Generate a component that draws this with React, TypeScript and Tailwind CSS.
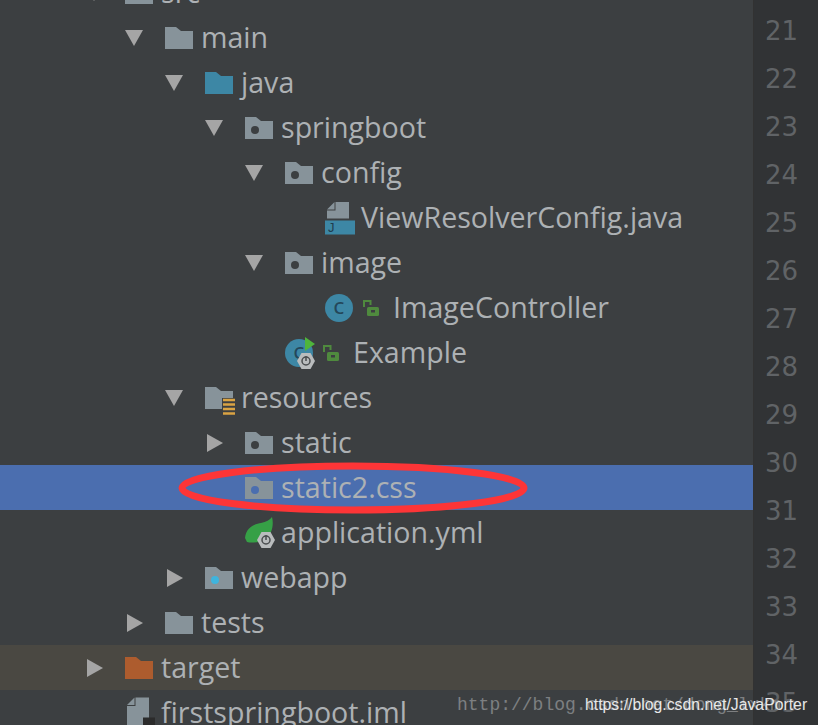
import type { ReactNode } from "react";

type TreeRow = {
  label: string;
  depth: number;
  arrow?: "down" | "right";
  icon: ReactNode;
  lock?: boolean;
  selected?: boolean;
  excluded?: boolean;
};

const gray = "#87939a";
const blue = "#3d87a5";

function Folder({ color = gray, dot, lines }: { color?: string; dot?: string; lines?: boolean }) {
  return (
    <svg width="28" height="22" viewBox="0 0 28 22" className="shrink-0 overflow-visible">
      <path d="M0 0H11L16 4H28V22H0Z" fill={color} />
      {dot && <circle cx="10" cy="13" r="4" fill={dot} />}
      {lines && (
        <g>
          <path d="M17 11H30V26H17Z" fill="#3c3f41" />
          <path d="M18 13H30M18 17.5H30M18 22H30M18 26.5H30" stroke="#d9a343" strokeWidth="2.4" />
        </g>
      )}
    </svg>
  );
}

function SpringHex({ x, y }: { x: number; y: number }) {
  return (
    <g transform={`translate(${x} ${y})`}>
      <path d="M4.5 0H13.5L18 8L13.5 16H4.5L0 8Z" fill="#b9bcbd" />
      <circle cx="9" cy="8" r="4" fill="none" stroke="#4a4d4f" strokeWidth="1.5" />
      <path d="M9 3V8" stroke="#4a4d4f" strokeWidth="1.5" />
    </g>
  );
}

function ClassIcon({ run }: { run?: boolean }) {
  return (
    <svg width="28" height="28" viewBox="0 0 28 28" className="shrink-0 overflow-visible">
      <circle cx="14" cy="14" r="14" fill={blue} />
      <text x="14" y="20" textAnchor="middle" fontSize="17" fontWeight="600" fill="#24475a" fontFamily="'Open Sans', sans-serif">
        C
      </text>
      {run && (
        <g>
          <path d="M20 -2L30 5L20 12Z" fill="#4fb53c" />
          <SpringHex x={12} y={14} />
        </g>
      )}
    </svg>
  );
}

function JavaFile() {
  return (
    <svg width="28" height="32" viewBox="0 0 28 32" className="shrink-0 overflow-visible">
      <path d="M10.5 0H24V16.5H2V8.5H10.5Z" fill={gray} />
      <path d="M2 7.5H9.5V0Z" fill={gray} />
      <rect x="0" y="18.5" width="30" height="14" fill={blue} />
      <text x="3" y="29.5" fontSize="13" fill="#1f3c4d" fontFamily="'Liberation Sans', sans-serif">
        J
      </text>
    </svg>
  );
}

function SpringLeaf() {
  return (
    <svg width="28" height="32" viewBox="0 0 28 32" className="shrink-0 overflow-visible">
      <path d="M0 21C1 10 10 7 16 6C21 5 25 3 27 0C29 8 27 17 21 22C14 26 6 26 2 25Z" fill="#36a046" />
      <SpringHex x={12} y={15} />
    </svg>
  );
}

function ImlFile() {
  return (
    <svg width="28" height="28" viewBox="0 0 28 28" className="shrink-0 overflow-visible">
      <path d="M10.5 -1.5H24V28H2V7H10.5Z" fill={gray} />
      <path d="M2 6H9.5V-1.5Z" fill={gray} />
      <rect x="18" y="18.5" width="12" height="10" fill="#2b2b2b" />
    </svg>
  );
}

function Lock() {
  return (
    <svg width="16" height="16" viewBox="0 0 16 16" className="shrink-0">
      <path d="M1 7V1H7.5V5" fill="none" stroke="#4f8a3e" strokeWidth="2" />
      <rect x="4" y="7" width="12" height="9" rx="1.5" fill="#4f8a3e" />
      <rect x="8" y="10" width="4" height="2.5" fill="#3c3f41" />
    </svg>
  );
}

function Arrow({ dir }: { dir: "down" | "right" }) {
  return (
    <svg width="18" height="18" viewBox="0 0 18 18" className="shrink-0">
      {dir === "down" ? <path d="M0 1H18L9 17Z" fill="#a5a5a5" /> : <path d="M2 0L18 9L2 18Z" fill="#a5a5a5" />}
    </svg>
  );
}

const rows: TreeRow[] = [
  { label: "src", depth: 0, arrow: "down", icon: <Folder /> },
  { label: "main", depth: 1, arrow: "down", icon: <Folder /> },
  { label: "java", depth: 2, arrow: "down", icon: <Folder color={blue} /> },
  { label: "springboot", depth: 3, arrow: "down", icon: <Folder dot="#3c3f41" /> },
  { label: "config", depth: 4, arrow: "down", icon: <Folder dot="#3c3f41" /> },
  { label: "ViewResolverConfig.java", depth: 5, icon: <JavaFile /> },
  { label: "image", depth: 4, arrow: "down", icon: <Folder dot="#3c3f41" /> },
  { label: "ImageController", depth: 5, icon: <ClassIcon />, lock: true },
  { label: "Example", depth: 4, icon: <ClassIcon run />, lock: true },
  { label: "resources", depth: 2, arrow: "down", icon: <Folder lines /> },
  { label: "static", depth: 3, arrow: "right", icon: <Folder dot="#3c3f41" /> },
  { label: "static2.css", depth: 3, icon: <Folder dot="#4b6eaf" />, selected: true },
  { label: "application.yml", depth: 3, icon: <SpringLeaf /> },
  { label: "webapp", depth: 2, arrow: "right", icon: <Folder dot="#3fb4dd" /> },
  { label: "tests", depth: 1, arrow: "right", icon: <Folder /> },
  { label: "target", depth: 0, arrow: "right", icon: <Folder color="#ad5c2e" />, excluded: true },
  { label: "firstspringboot.iml", depth: 0, icon: <ImlFile /> },
];

const lineNumbers = Array.from({ length: 15 }, (_, i) => 21 + i);

export default function App() {
  return (
    <div className="relative flex h-[725px] w-[818px] overflow-hidden bg-[#3c3f41] font-['Open_Sans',sans-serif]">
      {/* project tree */}
      <div className="-mt-[30px] w-[753px] shrink-0">
        {rows.map((row) => (
          <div
            key={row.label}
            className={`flex h-[45px] items-center ${row.selected ? "bg-[#4b6eaf]" : row.excluded ? "bg-[#4a4842]" : ""}`}
            style={{ paddingLeft: 85 + row.depth * 40 }}
          >
            <div className="w-[40px] shrink-0">{row.arrow && <Arrow dir={row.arrow} />}</div>
            {row.icon}
            {row.lock && (
              <div className="ml-[10px]">
                <Lock />
              </div>
            )}
            <span className={`text-[28.6px] leading-none text-[#adb1b4] ${row.lock ? "ml-[14px]" : "ml-[8px]"}`}>
              {row.label}
            </span>
          </div>
        ))}
      </div>

      {/* line number gutter */}
      <div className="flex-1 border-l border-[#323232] bg-[#313335] pl-[11px] pt-[7px] font-['DejaVu_Sans',sans-serif] text-[26px] leading-[48px] text-[#606366]">
        {lineNumbers.map((n) => (
          <div key={n}>{n}</div>
        ))}
      </div>

      {/* red marker drawn over the selected row */}
      <svg width="360" height="60" viewBox="0 0 360 60" className="absolute left-[173px] top-[458px]">
        <ellipse cx="180" cy="30" rx="171" ry="22" fill="none" stroke="#fd3537" strokeWidth="7" />
      </svg>

      {/* image watermarks */}
      <span className="absolute left-[457px] top-[694px] font-['Liberation_Mono',monospace] text-[18px] leading-[22px] whitespace-nowrap text-[#7d7f81]">
        http://blog.csdn.net/dong_lxkm
      </span>
      <span className="absolute left-[585px] top-[696px] font-['Liberation_Sans',sans-serif] text-[15.8px] leading-[18px] whitespace-nowrap text-[#e8e8e8]">
        https://blog.csdn.net/JavaPorter
      </span>
    </div>
  );
}
